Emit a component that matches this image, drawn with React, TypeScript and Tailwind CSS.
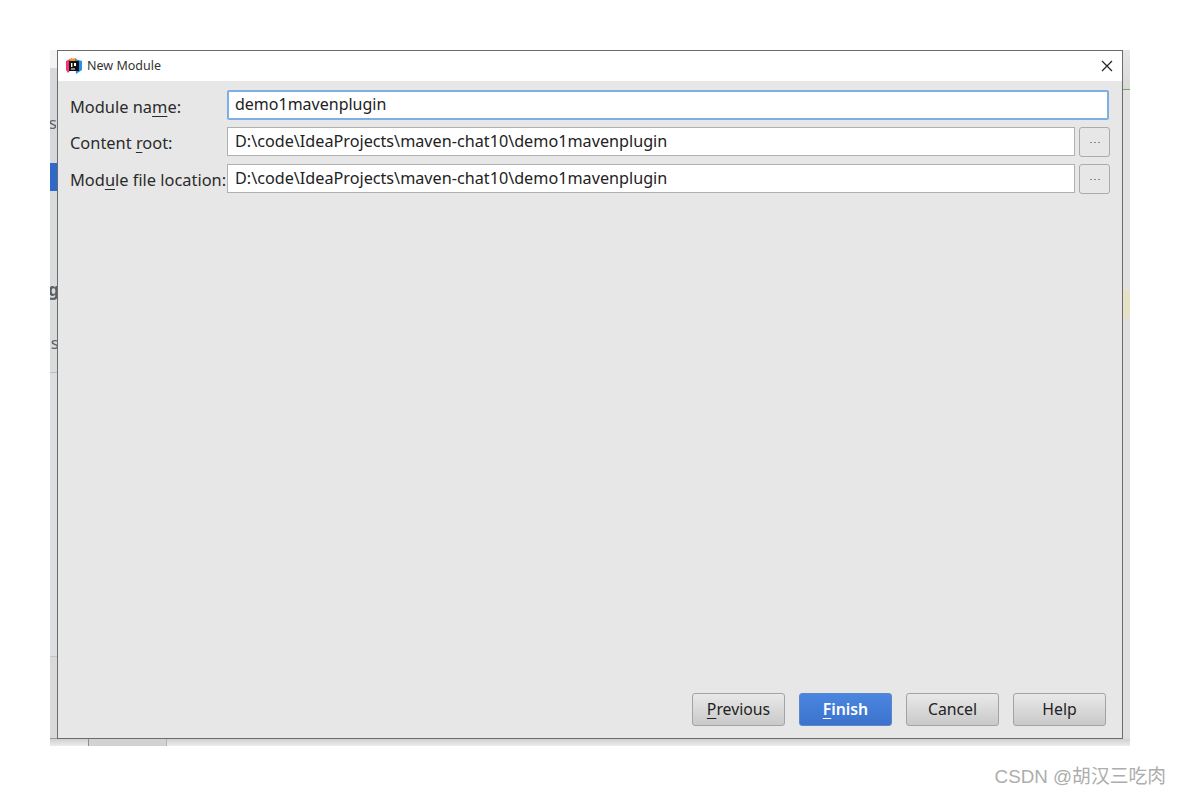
import React from "react";

const ui = "font-['Noto_Sans','Open_Sans',sans-serif]";

function Mn({ children }: { children: React.ReactNode }) {
  return <span className="underline decoration-1 underline-offset-[3px]">{children}</span>;
}

function Row({ label, value, focused }: { label: React.ReactNode; value: string; focused?: boolean }) {
  return (
    <div className="flex items-start h-[37px]">
      <div className={`w-[157px] shrink-0 text-[16.4px] leading-[24px] text-[#2b2b2b] whitespace-nowrap ${focused ? "pt-[5px]" : "pt-[4px]"}`}>{label}</div>
      {focused ? (
        <div className="w-[882px] h-[30px] bg-white border-2 border-[#7eaee6] rounded-[2px] pl-[6px] text-[16px] leading-[24px] text-[#222]">
          {value}
        </div>
      ) : (
        <div className="flex gap-[4px]">
          <div className="w-[848px] h-[29px] bg-white border border-[#b0b0b0] pl-[7px] text-[16.2px] leading-[26px] text-[#222]">
            {value}
          </div>
          <div className="w-[31px] h-[30px] border border-[#ababab] rounded-[3px] bg-[#e7e7e7] flex items-center justify-center gap-[2px]">
            <i className="block w-[2px] h-[1px] bg-[#8a8a8a]" />
            <i className="block w-[2px] h-[1px] bg-[#8a8a8a]" />
            <i className="block w-[2px] h-[1px] bg-[#8a8a8a]" />
          </div>
        </div>
      )}
    </div>
  );
}

function Btn({ children, primary }: { children: React.ReactNode; primary?: boolean }) {
  return (
    <div
      className={
        primary
          ? "w-[93px] h-[33px] rounded-[3px] border border-[#5a87c8] bg-gradient-to-b from-[#4a86e0] to-[#3c72cc] text-white font-semibold flex items-center justify-center text-[15.8px]"
          : "w-[93px] h-[33px] rounded-[3px] border border-[#a3a3a3] bg-gradient-to-b from-[#e9e9e9] to-[#c9c9c9] text-[#222] flex items-center justify-center text-[15.8px]"
      }
    >
      <span>{children}</span>
    </div>
  );
}

function Logo() {
  return (
    <svg width="16" height="16" viewBox="0 0 16 16" className="shrink-0">
      <path d="M0 3 L6 0 L7 9 L2 15 L0 12 Z" fill="#f0356f" />
      <path d="M4 1 L10 0 L12 4 L4 4 Z" fill="#f59a27" />
      <path d="M9 1 L16 3 L16 12 L10 16 Z" fill="#2b8fe8" />
      <rect x="3" y="3" width="10" height="10" fill="#141414" />
      <rect x="5" y="5" width="1.4" height="4" fill="#fff" />
      <rect x="8" y="5" width="2" height="3" fill="#fff" />
      <rect x="5" y="10.5" width="4" height="1" fill="#fff" />
    </svg>
  );
}

export default function App() {
  return (
    <div className={`relative w-[1180px] h-[796px] bg-white overflow-hidden ${ui}`}>
      <div className="pt-[50px] pl-[50px]">
        {/* IDE window behind the dialog */}
        <div className="relative w-[1080px] h-[696px] flex flex-col overflow-hidden blur-[0.3px]">
          <div className="flex flex-1 min-h-0">
            <div className="w-[7px] shrink-0 flex flex-col text-[17px] leading-none text-[#5a6068] bg-[#d8d9db]">
              <div className="h-[18px] bg-[#f3f3f3]" />
              <div className="h-[95px] relative bg-[#d6d8db]">
                <span className="absolute right-0 top-[46px]">s</span>
              </div>
              <div className="h-[28px] bg-[#2f68c8]" />
              <div className="h-[182px] relative bg-[#dadbdd] border-b border-[#bdbdbd]">
                <span className="absolute right-[-2px] top-[90px] font-bold">g</span>
                <span className="absolute right-[-2px] top-[143px]">s</span>
              </div>
              <div className="h-[284px] bg-[#dcdee2] border-b border-[#c4c4c4]" />
              <div className="flex-1 bg-[#d9d9d9] border-b border-[#9a9a9a]" />
            </div>
            <div className="flex-1" />
            <div className="w-[7px] shrink-0 flex flex-col">
              <div className="h-[40px] bg-gradient-to-b from-[#e6e6e6] to-[#d9d9d9] border-b border-[#6fae5c]" />
              <div className="h-[200px] bg-[#e2e2e2]" />
              <div className="h-[28px] bg-[#e6e0c6]" />
              <div className="flex-1 bg-[#e0e0e0]" />
            </div>
          </div>
          <div className="h-[7px] shrink-0 flex bg-gradient-to-b from-[#d0d0d0] to-[#ececec]">
            <div className="w-[39px] border-r border-[#8e8e8e]" />
            <div className="w-[78px] border-r border-[#b4b4b4] bg-[#d2d2d2]" />
          </div>
        </div>
      </div>

      {/* dialog */}
      <div className="absolute left-[57px] top-[50px] w-[1066px] h-[689px] border border-[#6b6b6b] flex flex-col bg-[#e7e7e7]">
        <div className="h-[30px] bg-white flex items-center pl-[8px] pr-[9px] gap-[5px] shrink-0">
          <Logo />
          <span className="text-[12.5px] text-[#333] flex-1">New Module</span>
          <svg width="12" height="12" viewBox="0 0 12 12">
            <path d="M1 1 L11 11 M11 1 L1 11" stroke="#222" strokeWidth="1.2" />
          </svg>
        </div>
        <div className="flex-1 pl-[12px] pt-[9px] flex flex-col">
          <Row label={<>Module na<Mn>m</Mn>e:</>} value="demo1mavenplugin" focused />
          <Row label={<>Content <Mn>r</Mn>oot:</>} value="D:\code\IdeaProjects\maven-chat10\demo1mavenplugin" />
          <Row label={<>Mod<Mn>u</Mn>le file location:</>} value="D:\code\IdeaProjects\maven-chat10\demo1mavenplugin" />
        </div>
        <div className="flex justify-end gap-[14px] pr-[16px] pb-[12px] shrink-0">
          <Btn><Mn>P</Mn>revious</Btn>
          <Btn primary><Mn>F</Mn>inish</Btn>
          <Btn>Cancel</Btn>
          <Btn>Help</Btn>
        </div>
      </div>

      <div className="absolute right-[14px] top-[765px] text-[18.8px] leading-[24px] text-[#adadad] font-['Liberation_Sans','Noto_Sans_CJK_SC',sans-serif] whitespace-nowrap">
        CSDN @胡汉三吃肉
      </div>
    </div>
  );
}
